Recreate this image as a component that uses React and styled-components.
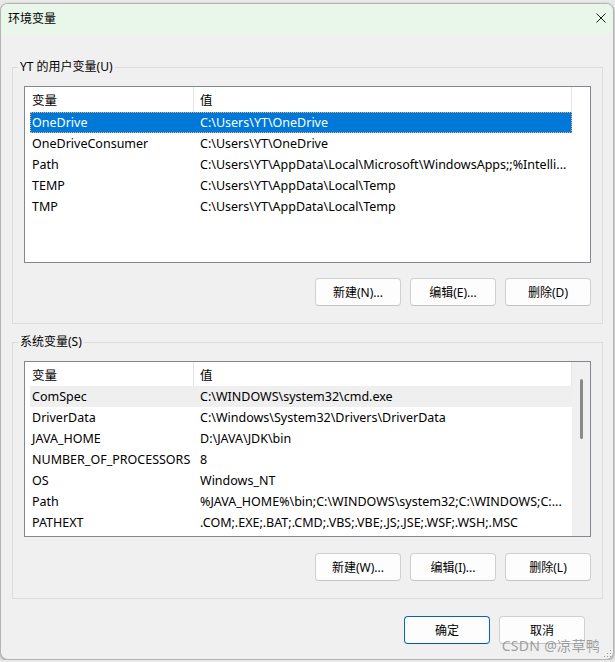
import React from 'react';
import styled, { createGlobalStyle } from 'styled-components';

const GlobalStyle = createGlobalStyle`
  html, body {
    margin: 0;
    padding: 0;
    background: #e9e9e9;
  }
  body {
    font-family: "Noto Sans", "Noto Sans CJK SC", sans-serif;
    font-size: 12px;
    color: #000;
  }
`;

const Window = styled.div`
  position: relative;
  box-sizing: border-box;
  width: 614px;
  height: 657px;
  margin-top: 3px;
  border: 1px solid #b4b4b4;
  border-radius: 8px;
  background: #f0f0f0;
  overflow: hidden;
  display: flex;
  flex-direction: column;
  box-shadow: 0 1px 3px rgba(0, 0, 0, 0.35);
`;

const TitleBar = styled.div`
  height: 30px;
  flex: none;
  display: flex;
  align-items: center;
  justify-content: space-between;
  padding: 0 7px 4px 7px;
  box-sizing: border-box;
  background: #e9f7ea;
`;

const Title = styled.span`
  font-family: "Noto Sans CJK SC", sans-serif;
  font-size: 12px;
`;

const CloseIcon = styled.svg`
  width: 10px;
  height: 10px;
  margin-top: 2px;
`;

const Body = styled.div`
  flex: 1;
  display: flex;
  flex-direction: column;
  padding: 25px 10px 0 11px;
`;

const Group = styled.fieldset`
  margin: 0;
  min-width: 0;
  padding: 11px 11px 17px 11px;
  border: 1px solid #dcdcdc;
  & + & {
    margin-top: 10px;
  }
`;

const Legend = styled.legend`
  margin-left: -6px;
  padding: 0 2px;
  line-height: 16px;
  font-size: 12px;
`;

const ListBox = styled.div`
  box-sizing: border-box;
  height: ${({ $height }) => $height}px;
  border: 1px solid #828790;
  background: #fff;
  display: flex;
  overflow: hidden;
`;

const ListBody = styled.div`
  width: 547px;
  flex: none;
  display: flex;
  flex-direction: column;
`;

const Header = styled.div`
  height: ${({ $height }) => $height}px;
  flex: none;
  display: flex;
  align-items: stretch;
  border-right: 1px solid #e5e5e5;
`;

const HeaderCell = styled.div`
  display: flex;
  align-items: center;
  padding-left: ${({ $first }) => ($first ? 7 : 6)}px;
  width: ${({ $first }) => ($first ? '169px' : 'auto')};
  flex: ${({ $first }) => ($first ? 'none' : 1)};
  box-sizing: border-box;
  border-right: ${({ $first }) => ($first ? '1px solid #e5e5e5' : 'none')};
  font-family: "Noto Sans CJK SC", sans-serif;
  font-size: 12.5px;
`;

const Row = styled.div`
  box-sizing: border-box;
  height: 21px;
  margin-left: 5px;
  width: 542px;
  display: flex;
  align-items: center;
  white-space: nowrap;
  font-size: 12.5px;
  background: ${({ $state }) =>
    $state === 'selected' ? '#0078d7' : $state === 'hover' ? '#efefef' : 'transparent'};
  color: ${({ $state }) => ($state === 'selected' ? '#fff' : '#000')};
  outline: ${({ $state }) => ($state === 'selected' ? '1px dotted #e7b57a' : 'none')};
  outline-offset: -1px;
`;

const NameCell = styled.span`
  width: 168px;
  flex: none;
  padding-left: 2px;
  box-sizing: border-box;
  overflow: hidden;
`;

const ValueCell = styled.span`
  flex: 1;
  padding-left: 2px;
  overflow: hidden;
`;

const Scrollbar = styled.div`
  flex: 1;
  background: ${({ $visible }) => ($visible ? '#f0f0f0' : 'transparent')};
  display: flex;
  justify-content: center;
`;

const Thumb = styled.div`
  width: 3px;
  height: 60px;
  margin-top: 17px;
  margin-left: 1px;
  border-radius: 2px;
  background: #8a8a8a;
`;

const ButtonRow = styled.div`
  display: flex;
  justify-content: flex-end;
  gap: 9px;
  margin-top: ${({ $top }) => $top}px;
`;

const Button = styled.button`
  box-sizing: border-box;
  width: 86px;
  height: 28px;
  padding: 0;
  border: 1px solid ${({ $primary }) => ($primary ? '#0067c0' : '#d0d0d0')};
  border-bottom-color: ${({ $primary }) => ($primary ? '#0058a8' : '#c4c4c4')};
  border-radius: 4px;
  background: #fdfdfd;
  font-family: "Noto Sans", "Noto Sans CJK SC", sans-serif;
  font-size: 12px;
  color: #000;
`;

const Footer = styled.div`
  display: flex;
  justify-content: flex-end;
  gap: 9px;
  margin-top: 17px;
  padding-right: 18px;
`;

const Watermark = styled.div`
  position: absolute;
  right: 13px;
  bottom: 4px;
  font-family: "Noto Sans", "Noto Sans CJK SC", sans-serif;
  font-size: 14px;
  color: rgba(130, 130, 130, 0.75);
  letter-spacing: 0.3px;
  pointer-events: none;
`;

const Grip = styled.svg`
  position: absolute;
  right: 1px;
  bottom: 1px;
  width: 8px;
  height: 8px;
`;

const userVars = [
  ['OneDrive', 'C:\\Users\\YT\\OneDrive'],
  ['OneDriveConsumer', 'C:\\Users\\YT\\OneDrive'],
  ['Path', 'C:\\Users\\YT\\AppData\\Local\\Microsoft\\WindowsApps;;%Intelli...'],
  ['TEMP', 'C:\\Users\\YT\\AppData\\Local\\Temp'],
  ['TMP', 'C:\\Users\\YT\\AppData\\Local\\Temp'],
];

const systemVars = [
  ['ComSpec', 'C:\\WINDOWS\\system32\\cmd.exe'],
  ['DriverData', 'C:\\Windows\\System32\\Drivers\\DriverData'],
  ['JAVA_HOME', 'D:\\JAVA\\JDK\\bin'],
  ['NUMBER_OF_PROCESSORS', '8'],
  ['OS', 'Windows_NT'],
  ['Path', '%JAVA_HOME%\\bin;C:\\WINDOWS\\system32;C:\\WINDOWS;C:...'],
  ['PATHEXT', '.COM;.EXE;.BAT;.CMD;.VBS;.VBE;.JS;.JSE;.WSF;.WSH;.MSC'],
];

function VarList({ rows, height, headerHeight, activeIndex, activeState, scroll }) {
  return (
    <ListBox $height={height}>
      <ListBody>
        <Header $height={headerHeight}>
          <HeaderCell $first>变量</HeaderCell>
          <HeaderCell>值</HeaderCell>
        </Header>
        {rows.map(([name, value], i) => (
          <Row key={name + i} $state={i === activeIndex ? activeState : undefined}>
            <NameCell>{name}</NameCell>
            <ValueCell>{value}</ValueCell>
          </Row>
        ))}
      </ListBody>
      <Scrollbar $visible={scroll}>{scroll && <Thumb />}</Scrollbar>
    </ListBox>
  );
}

export default function App() {
  return (
    <>
      <GlobalStyle />
      <Window>
        <TitleBar>
          <Title>环境变量</Title>
          <CloseIcon viewBox="0 0 10 10">
            <path d="M0.5 0.5 L9.5 9.5 M9.5 0.5 L0.5 9.5" stroke="#1a1a1a" strokeWidth="1" fill="none" />
          </CloseIcon>
        </TitleBar>
        <Body>
          <Group>
            <Legend>YT 的用户变量(U)</Legend>
            <VarList
              rows={userVars}
              height={177}
              headerHeight={25}
              activeIndex={0}
              activeState="selected"
            />
            <ButtonRow $top={15}>
              <Button>新建(N)...</Button>
              <Button>编辑(E)...</Button>
              <Button>删除(D)</Button>
            </ButtonRow>
          </Group>
          <Group>
            <Legend>系统变量(S)</Legend>
            <VarList
              rows={systemVars}
              height={176}
              headerHeight={24}
              activeIndex={0}
              activeState="hover"
              scroll
            />
            <ButtonRow $top={16}>
              <Button>新建(W)...</Button>
              <Button>编辑(I)...</Button>
              <Button>删除(L)</Button>
            </ButtonRow>
          </Group>
          <Footer>
            <Button $primary>确定</Button>
            <Button>取消</Button>
          </Footer>
        </Body>
        <Watermark>CSDN @凉草鸭</Watermark>
        <Grip viewBox="0 0 8 8">
          <rect x="6" y="0" width="1" height="1" fill="#9a9a9a" />
          <rect x="3" y="3" width="1" height="1" fill="#9a9a9a" />
          <rect x="6" y="3" width="1" height="1" fill="#9a9a9a" />
          <rect x="0" y="6" width="1" height="1" fill="#9a9a9a" />
          <rect x="3" y="6" width="1" height="1" fill="#9a9a9a" />
          <rect x="6" y="6" width="1" height="1" fill="#9a9a9a" />
        </Grip>
      </Window>
    </>
  );
}
